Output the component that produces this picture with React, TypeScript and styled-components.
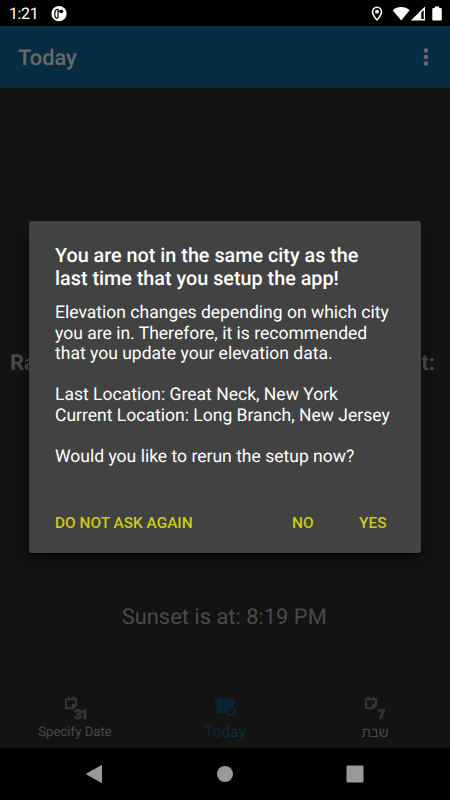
import React from 'react';
import styled, { createGlobalStyle } from 'styled-components';

const Global = createGlobalStyle`
  * { box-sizing: border-box; }
  body { margin: 0; background: #000; font-family: Roboto, "Liberation Sans", sans-serif; text-rendering: geometricPrecision; }
  p, h1, h2 { margin: 0; }
`;

const Screen = styled.div`
  position: relative;
  width: 450px;
  height: 800px;
  display: flex;
  flex-direction: column;
  overflow: hidden;
  background: #000;
`;

const StatusBar = styled.header`
  height: 26px;
  flex: none;
  display: flex;
  align-items: center;
  padding: 1px 8px 0 9px;
  color: #fff;
  font-size: 16px;
`;

const Clock = styled.span`
  width: 41.5px;
  letter-spacing: -0.4px;
`;

const StatusIcons = styled.div`
  display: flex;
  margin-left: auto;
`;

const AppBar = styled.div`
  height: 61.5px;
  flex: none;
  display: flex;
  align-items: center;
  justify-content: space-between;
  padding: 4px 20px 0 18px;
  background: #062d43;
  color: #6a6a6a;
  svg { margin-bottom: 4px; }
`;

const BarTitle = styled.h1`
  font-size: 21.8px;
  font-weight: 500;
  line-height: 26px;
`;

const Content = styled.main`
  flex: 1;
  display: flex;
  flex-direction: column;
  background: #131313;
  color: #4a4a4a;
`;

const Headline = styled.div`
  display: flex;
  justify-content: space-between;
  margin-top: 262.5px;
  padding: 0 15px 0 10px;
  font-size: 22px;
  font-weight: 700;
  line-height: 28px;
`;

const Sunset = styled.p`
  margin-top: 226px;
  padding-right: 1.5px;
  text-align: center;
  font-size: 21.9px;
  line-height: 28px;
`;

const Tabs = styled.nav`
  height: 63px;
  flex: none;
  display: grid;
  grid-template-columns: repeat(3, 1fr);
  background: #131313;
`;

const Tab = styled.div<{ $active?: boolean }>`
  display: flex;
  flex-direction: column;
  align-items: center;
  padding-top: 10px;
  color: ${(p) => (p.$active ? '#082c40' : '#4a4a4a')};
  font-size: ${(p) => (p.$active ? '15.6px' : '13.2px')};
  line-height: 18px;
  svg { margin-bottom: ${(p) => (p.$active ? '2px' : '3px')}; }
`;

const Hebrew = styled.span`
  font-family: "Noto Sans Hebrew", "Open Sans", "DejaVu Sans", sans-serif;
  font-size: 14px;
`;

const SystemNav = styled.footer`
  height: 52px;
  flex: none;
  display: flex;
  align-items: center;
  justify-content: space-between;
  padding: 0 86px 0 85px;
`;

const Overlay = styled.div`
  position: absolute;
  inset: 26px 0 52px;
  padding: 195px 29px 0;
`;

const Dialog = styled.section`
  height: 331.5px;
  display: flex;
  flex-direction: column;
  padding: 23px 26px 0;
  border-radius: 2px;
  background: #424242;
  color: #fff;
  box-shadow: 0 1px 2px #000, 0 8px 18px rgba(0, 0, 0, 0.4);
`;

const DialogTitle = styled.h2`
  font-size: 19.8px;
  font-weight: 500;
  line-height: 23px;
  white-space: nowrap;
`;

const Message = styled.p`
  margin-top: 13px;
  font-size: 17.54px;
  line-height: 20.6px;
  white-space: nowrap;
`;

const Actions = styled.div`
  display: flex;
  gap: 45.5px;
  margin-top: 45px;
  padding-right: 8.5px;
`;

const Action = styled.button<{ $start?: boolean }>`
  margin: 0 ${(p) => (p.$start ? 'auto' : '0')} 0 0;
  padding: 0;
  border: 0;
  background: none;
  color: #d0c81c;
  font: 500 15.4px/20px Roboto, sans-serif;
`;

const AppLogo = () => (
  <svg width="16" height="16" viewBox="0 0 16 16">
    <circle cx="8" cy="7.700" r="7.600" fill="#fff" />
    <path d="M7.300 3.300C4.800 3 3.800 5 3.800 7.600s.6 4.600 1.700 4.600 1.500-1 1.500-2.300V3.300" fill="none" stroke="#000" strokeWidth="1.200" />
    <circle cx="10.300" cy="5.300" r="1.900" />
    <path d="M7 4.500h3v1.200H7Z" />
  </svg>
);

const StatusGlyphs = () => (
  <svg width="76" height="18" viewBox="0 0 76 18" fill="#fff">
    <path d="M11 2.200a4.500 4.500 0 0 0-4.500 4.500c0 3.300 4.500 8.200 4.500 8.200s4.500-4.900 4.500-8.200A4.500 4.500 0 0 0 11 2.200Z" fill="none" stroke="#fff" strokeWidth="1.500" />
    <circle cx="11" cy="6.700" r="1.900" />
    <path d="M26.700 5.200C31.500 .9 38.800 .9 43.600 5.200L35.200 15.500Z" />
    <path fillRule="evenodd" d="M59 1.500v14H44.800Z M57.700 5l-2.400 2.400V14h2.400Z" />
    <path d="M68.800 1.500h4.400v1.600h1.600q1 0 1 1V14.500q0 1-1 1h-7.500q-1 0-1-1V4.100q0-1 1-1h1.500Z" />
  </svg>
);

const More = () => (
  <svg width="8" height="20" viewBox="0 0 8 20" fill="#6a6a6a">
    <circle cx="4" cy="3.500" r="2.300" />
    <circle cx="4" cy="10" r="2.300" />
    <circle cx="4" cy="16.500" r="2.300" />
  </svg>
);

const NoteDay = ({ day }: { day: string }) => (
  <svg width="26" height="26" viewBox="0 0 26 26" overflow="visible">
    <path d="M4 4.200h10v6l-3 3H4Z M10.800 13v-3.200H14 M6.500 1.500v3 M11.500 1.500v3" fill="none" stroke="#353535" strokeWidth="2" />
    <text x={day.length > 1 ? 12 : 15.500} y="24.300" fill="#353535" stroke="#353535" strokeWidth=".6" fontFamily="Roboto" fontSize="13.500" fontWeight="900" letterSpacing="-1.200">{day}</text>
  </svg>
);

const CalendarToday = () => (
  <svg width="26" height="26" viewBox="0 0 26 26">
    <path d="M3 4h20v5H3Z M4.500 9h17v9.500h-17Z M7 2h2v3H7Z M17 2h2v3h-2Z" fill="#082535" />
    <path d="M5 9h16M5 14h9M10 8v10M15 8v4" stroke="#0b1c25" strokeWidth=".7" />
    <path d="M15.500 12.700h7.200v7.200h-7.200Z" fill="#131313" stroke="#082535" strokeWidth="2" />
  </svg>
);

export default function App() {
  return (
    <>
      <Global />
      <Screen>
        <StatusBar>
          <Clock>1:21</Clock>
          <AppLogo />
          <StatusIcons><StatusGlyphs /></StatusIcons>
        </StatusBar>
        <AppBar>
          <BarTitle>Today</BarTitle>
          <More />
        </AppBar>
        <Content>
          <Headline><span>Ra</span><span>t:</span></Headline>
          <Sunset>Sunset is at: 8:19 PM</Sunset>
        </Content>
        <Tabs>
          <Tab><NoteDay day="31" />Specify Date</Tab>
          <Tab $active><CalendarToday />Today</Tab>
          <Tab><NoteDay day="7" /><Hebrew>שבת</Hebrew></Tab>
        </Tabs>
        <SystemNav>
          <svg width="18" height="20" viewBox="0 0 18 20"><path d="M1.500 10 16.500 1.500v17Z" fill="#999" stroke="#999" strokeLinejoin="round" /></svg>
          <svg width="18" height="18" viewBox="0 0 18 18"><circle cx="9" cy="9" r="8" fill="#999" /></svg>
          <svg width="18" height="18" viewBox="0 0 18 18"><rect x=".5" y=".5" width="17" height="17" rx="1" fill="#999" /></svg>
        </SystemNav>
        <Overlay>
          <Dialog>
            <DialogTitle>You are not in the same city as the<br />last time that you setup the app!</DialogTitle>
            <Message>
              Elevation changes depending on which city<br />
              you are in. Therefore, it is recommended<br />
              that you update your elevation data.<br />
              <br />
              Last Location: Great Neck, New York<br />
              Current Location: Long Branch, New Jersey<br />
              <br />
              Would you like to rerun the setup now?
            </Message>
            <Actions>
              <Action $start>DO NOT ASK AGAIN</Action>
              <Action>NO</Action>
              <Action>YES</Action>
            </Actions>
          </Dialog>
        </Overlay>
      </Screen>
    </>
  );
}
